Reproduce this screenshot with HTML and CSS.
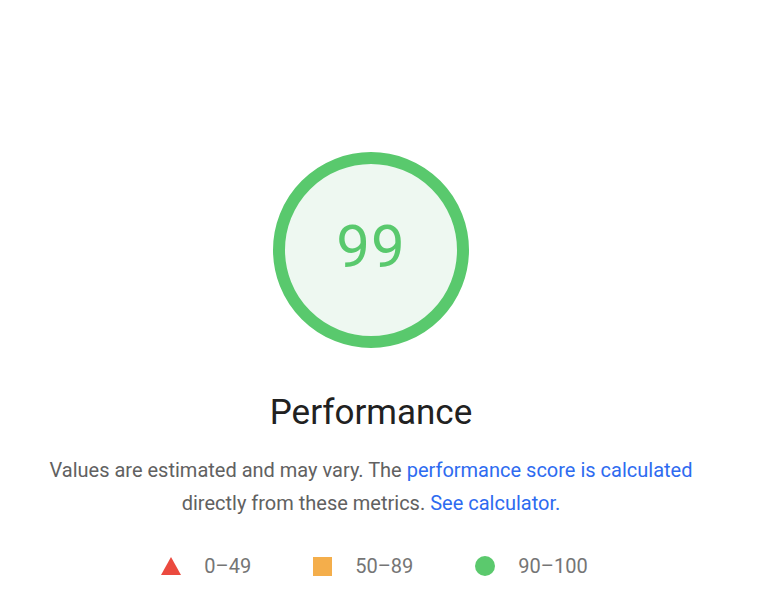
FILE: index.html
```html
<!DOCTYPE html>
<html lang="en">
<head>
    <meta charset="UTF-8">
    <meta name="viewport" content="width=device-width, initial-scale=1.0">
    <title>Performance</title>
    <link rel="stylesheet" href="styles.css">
</head>
<body>
    <div class="report">
        <div class="gauge">
            <svg class="gauge-ring" viewBox="0 0 196 196" width="196" height="196">
                <circle cx="98" cy="98" r="92" fill="#eef8f1" stroke="#59c96d" stroke-width="12"/>
            </svg>
            <span class="gauge-score">99</span>
        </div>
        <h1 class="title">Performance</h1>
        <p class="desc">
            Values are estimated and may vary. The <a href="#">performance score is calculated</a><br>
            directly from these metrics. <a href="#">See calculator.</a>
        </p>
        <ul class="legend">
            <li>
                <svg width="20" height="18" viewBox="0 0 20 18"><polygon points="10,0 20,18 0,18" fill="#eb4a3f"/></svg>
                <span>0–49</span>
            </li>
            <li>
                <svg width="19" height="19" viewBox="0 0 19 19"><rect width="19" height="19" fill="#f4ae4b"/></svg>
                <span>50–89</span>
            </li>
            <li>
                <svg width="20" height="20" viewBox="0 0 20 20"><circle cx="10" cy="10" r="10" fill="#5bc96d"/></svg>
                <span>90–100</span>
            </li>
        </ul>
    </div>
</body>
</html>
```

FILE: styles.css
```css
body {
    margin: 0;
    background-color: #fff;
    font-family: Roboto, "Liberation Sans", sans-serif;
}

.report {
    width: 742px;
    padding-top: 152px;
    display: flex;
    flex-direction: column;
    align-items: center;
    text-align: center;
}

.gauge {
    position: relative;
    width: 196px;
    height: 196px;
}

.gauge-ring {
    display: block;
}

.gauge-score {
    position: absolute;
    top: -3px;
    left: 0;
    width: 196px;
    line-height: 196px;
    font-size: 60px;
    color: #59c96d;
    letter-spacing: 1px;
}

.title {
    margin: 45px 0 0;
    font-size: 35px;
    font-weight: 400;
    line-height: 40px;
    color: #212121;
}

.desc {
    margin: 21px 0 0;
    font-size: 20px;
    line-height: 33px;
    color: #616161;
}

.desc a {
    color: #2e6bf0;
    text-decoration: none;
}

.legend {
    list-style: none;
    margin: 34px 0 0;
    padding: 0 0 0 7px;
    display: flex;
    gap: 62px;
    font-size: 20px;
    color: #757575;
}

.legend li {
    display: flex;
    align-items: center;
    gap: 23px;
}
```
